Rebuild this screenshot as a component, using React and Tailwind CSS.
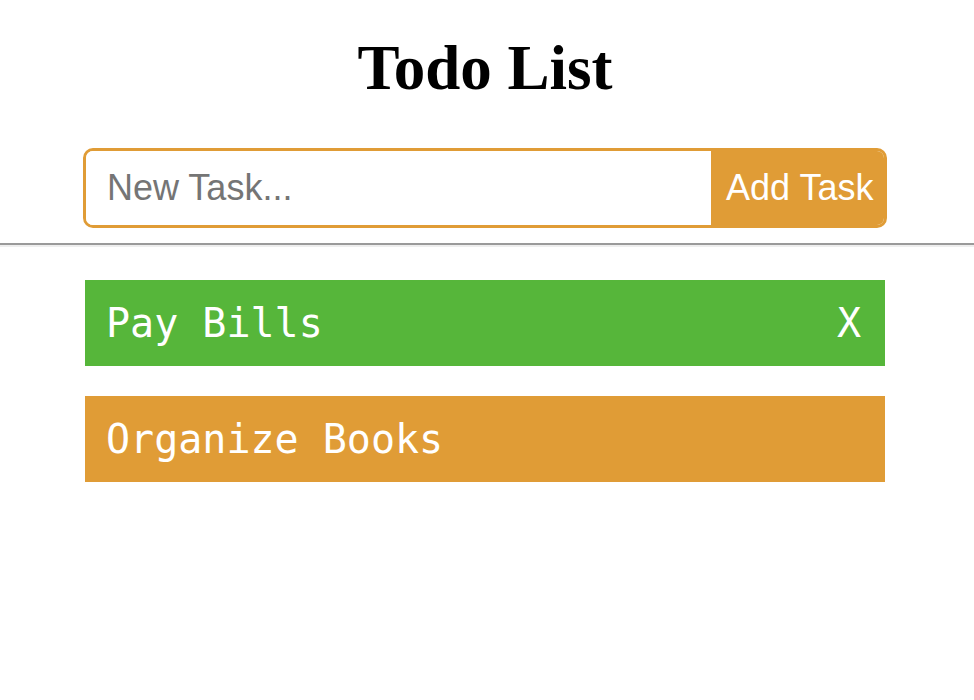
export default function App() {
  return (
    <div className="w-[974px] h-[700px] bg-white overflow-hidden">
      <div className="w-[970px]">
        <h1
          className="text-center text-[63px] font-bold leading-none pt-[37px] text-black"
          style={{ fontFamily: '"Liberation Serif", serif' }}
        >
          Todo List
        </h1>
        <div className="mt-[48px] flex justify-center">
          <div className="flex w-[804px] h-[80px] border-[3px] border-[#e09c36] rounded-[10px] overflow-hidden">
            <input
              className="flex-1 min-w-0 outline-none pl-[21px] text-[36px] placeholder:text-[#757575] text-black bg-white"
              style={{ fontFamily: '"Liberation Sans", Arial, sans-serif' }}
              placeholder="New Task..."
            />
            <button
              className="w-[173px] bg-[#e09c36] text-white text-[36px] pl-[15px] text-left"
              style={{ fontFamily: '"Liberation Sans", Arial, sans-serif' }}
            >
              Add Task
            </button>
          </div>
        </div>
      </div>
      <div className="mt-[15px] border-t-2 border-b-2 border-t-[#9a9a9a] border-b-[#eeeeee]" />
      <div className="w-[970px]">
        <ul className="mt-[33px] flex flex-col gap-[30px] items-center">
          <li
            className="w-[800px] h-[86px] bg-[#56b63a] text-white text-[40px] flex items-center justify-between pl-[21px] pr-[24px]"
            style={{ fontFamily: '"DejaVu Sans Mono", monospace' }}
          >
            <span>Pay Bills</span>
            <span>X</span>
          </li>
          <li
            className="w-[800px] h-[86px] bg-[#e09c36] text-white text-[40px] flex items-center px-[21px]"
            style={{ fontFamily: '"DejaVu Sans Mono", monospace' }}
          >
            <span>Organize Books</span>
          </li>
        </ul>
      </div>
    </div>
  );
}
